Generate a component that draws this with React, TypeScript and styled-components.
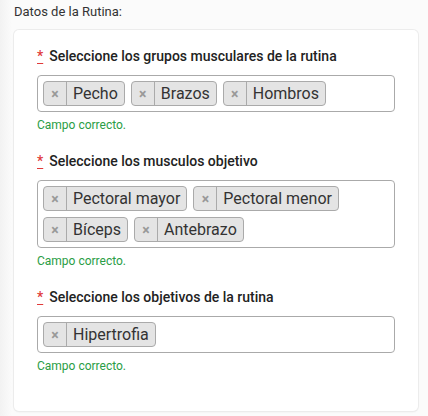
import React from "react";
import styled, { createGlobalStyle } from "styled-components";

const Global = createGlobalStyle`
  html, body { margin: 0; padding: 0; background: #f4f4f4; }
  body { font-family: Roboto, "Liberation Sans", Arial, sans-serif; color: #333; }
`;

const Page = styled.div`
  width: 428px;
  height: 416px;
  box-sizing: border-box;
  padding: 3px 10px 0 14px;
  background: linear-gradient(to right, #f2f2f2 0px, #fbfbfb 12px, #fbfbfb 100%);
`;

const Title = styled.div`
  font-size: 13px;
  line-height: 18px;
  color: #333;
  height: 27px;
`;

const Card = styled.div`
  background: #fff;
  border-radius: 5px;
  box-shadow: 0 0 0 1px #ececec, 0 1px 2px rgba(0, 0, 0, 0.08);
  padding: 18px 23px 38px 23px;
  display: flex;
  flex-direction: column;
  gap: 21px;
`;

const Field = styled.div`
  display: flex;
  flex-direction: column;
`;

const Label = styled.div`
  font-size: 14px;
  font-weight: 500;
  line-height: 16px;
  color: #222;
  display: flex;
  gap: 6px;
  margin-bottom: 11px;
`;

const Req = styled.span`
  color: #e03a3a;
  text-decoration: underline;
  text-underline-offset: 2px;
  font-weight: 500;
`;

const Box = styled.div`
  border: 1px solid #aaa;
  border-radius: 4px;
  padding: 5px;
  display: flex;
  flex-wrap: wrap;
  gap: 6px;
  min-height: 25px;
`;

const Tag = styled.div`
  display: flex;
  align-items: stretch;
  height: 25px;
  box-sizing: border-box;
  background: #e4e4e4;
  border: 1px solid #aaa;
  border-radius: 4px;
  font-size: 16px;
  color: #333;
`;

const Remove = styled.span`
  width: 22px;
  display: flex;
  align-items: center;
  justify-content: center;
  border-right: 1px solid #aaa;
  color: #999;
  font-size: 14px;
  font-weight: 700;
`;

const TagText = styled.span`
  display: flex;
  align-items: center;
  padding: 0 6px 0 6px;
`;

const Ok = styled.div`
  margin-top: 6px;
  font-size: 12px;
  line-height: 14px;
  color: #2a9d45;
`;

const fields = [
  { label: "Seleccione los grupos musculares de la rutina", tags: ["Pecho", "Brazos", "Hombros"] },
  { label: "Seleccione los musculos objetivo", tags: ["Pectoral mayor", "Pectoral menor", "Bíceps", "Antebrazo"] },
  { label: "Seleccione los objetivos de la rutina", tags: ["Hipertrofia"] },
];

export default function App() {
  return (
    <>
      <Global />
      <Page>
        <Title>Datos de la Rutina:</Title>
        <Card>
          {fields.map((f) => (
            <Field key={f.label}>
              <Label>
                <Req>*</Req>
                <span>{f.label}</span>
              </Label>
              <Box>
                {f.tags.map((t) => (
                  <Tag key={t}>
                    <Remove>×</Remove>
                    <TagText>{t}</TagText>
                  </Tag>
                ))}
              </Box>
              <Ok>Campo correcto.</Ok>
            </Field>
          ))}
        </Card>
      </Page>
    </>
  );
}
